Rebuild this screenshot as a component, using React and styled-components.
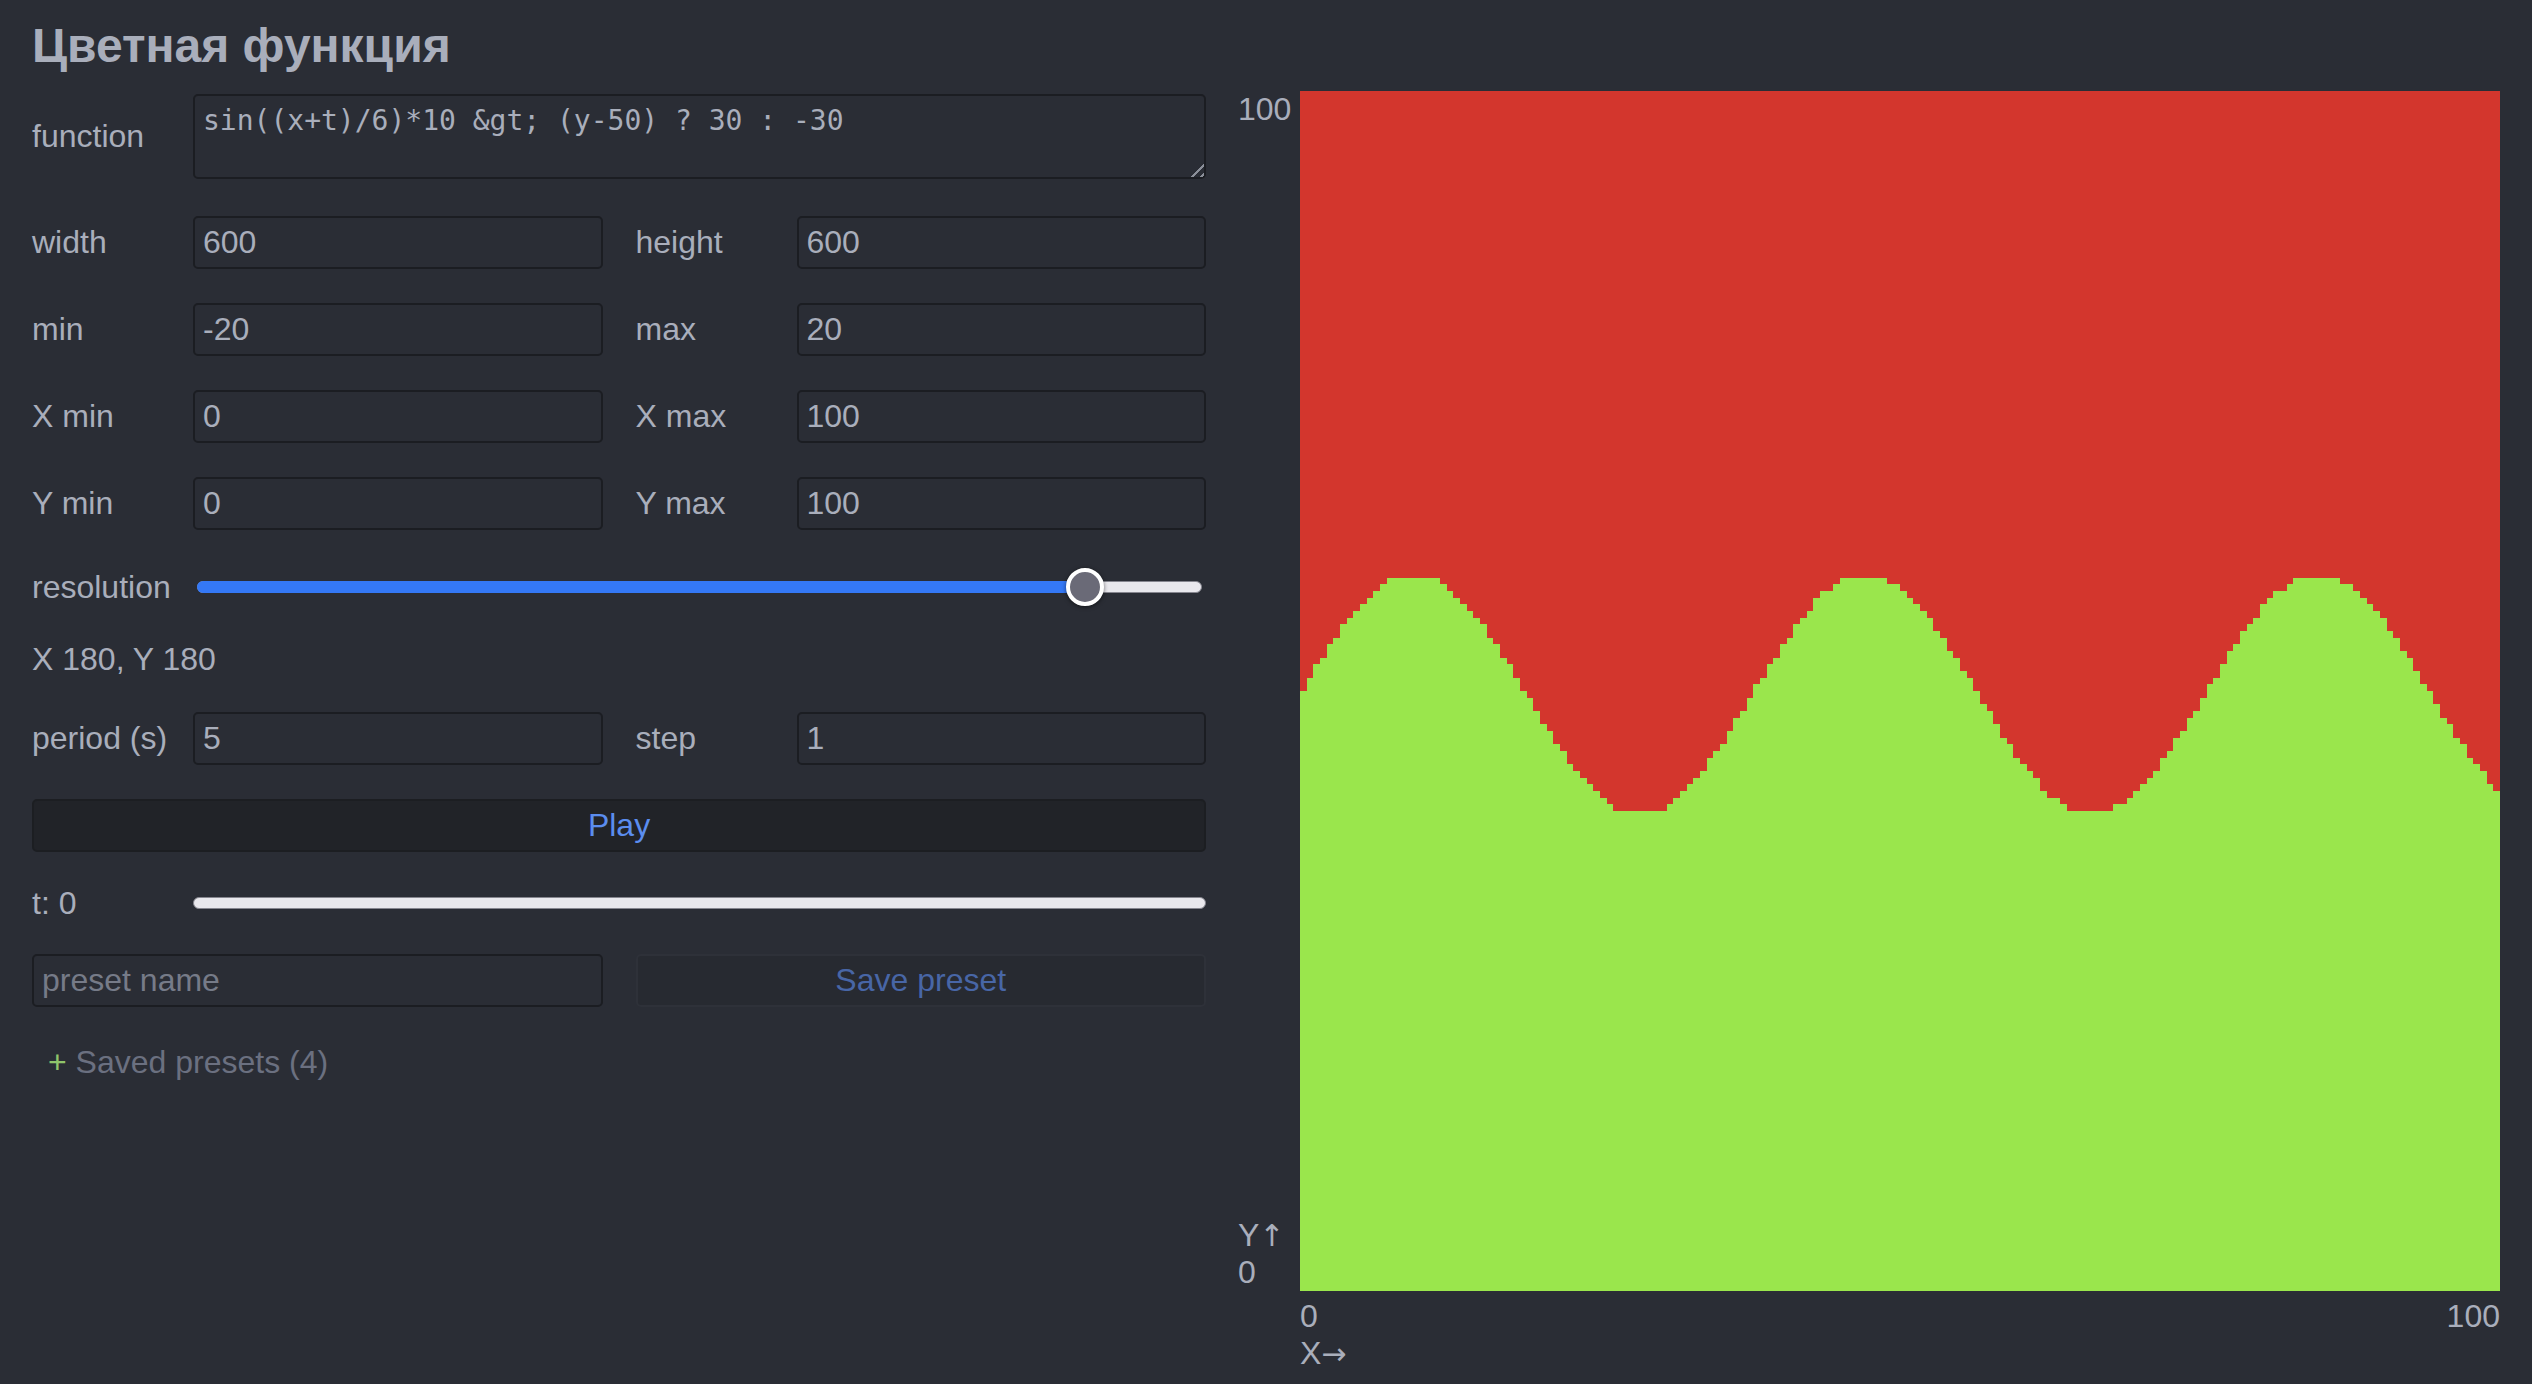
import React from "react";
import styled, { createGlobalStyle } from "styled-components";

const GlobalStyle = createGlobalStyle`
  html, body { margin: 0; padding: 0; background: #2a2d35; }
  * { box-sizing: border-box; }
`;

const Page = styled.div`
  min-height: 100vh;
  padding: 18px 32px 0;
  background: #2a2d35;
  color: #a9aebb;
  font-family: "Liberation Sans", Arial, sans-serif;
`;

const Title = styled.h1`
  margin: 0;
  font-size: 48px;
  line-height: 55px;
  font-weight: 700;
  color: #a9aebb;
`;

const Main = styled.div`
  display: flex;
  align-items: flex-start;
  gap: 32px;
  margin-top: 18px;
`;

const Form = styled.div`
  width: 1174px;
  display: flex;
  flex-direction: column;
  gap: 34px;
  padding-top: 3px;
`;

const Row = styled.div`
  display: grid;
  grid-template-columns: 128px 1fr 128px 1fr;
  grid-template-rows: ${(p) => p.$h || 53}px;
  column-gap: 33px;
  align-items: center;
  height: ${(p) => p.$h || 53}px;
  margin-top: ${(p) => p.$mt || 0}px;
`;

const Label = styled.label`
  font-size: 32px;
  line-height: 37px;
  white-space: nowrap;
  color: #a9aebb;
`;

const Text = styled.div`
  font-size: 32px;
  line-height: 37px;
  height: 37px;
  margin-top: -3px;
  color: #a9aebb;
`;

const Input = styled.input`
  grid-column: span ${(p) => p.$span || 1};
  width: 100%;
  min-width: 0;
  height: 53px;
  padding: 0 8px;
  background: #2a2d35;
  border: 2px solid #1b1d22;
  border-radius: 5px;
  color: #a9aebb;
  font-family: "Liberation Sans", Arial, sans-serif;
  font-size: 32px;
  outline: none;
  &::placeholder { color: #767b88; }
`;

const Area = styled.textarea`
  grid-column: span 3;
  width: 100%;
  height: 85px;
  padding: 8px;
  background: #2a2d35;
  border: 2px solid #1b1d22;
  border-radius: 5px;
  color: #a9aebb;
  font-family: "DejaVu Sans Mono", "Liberation Mono", monospace;
  font-size: 28px;
  outline: none;
  resize: vertical;
  &::-webkit-resizer {
    background:
      linear-gradient(135deg, #2a2d35 50%, transparent 50%),
      repeating-linear-gradient(135deg, #8b8f99 0 2px, transparent 2px 6px);
  }
`;

const Button = styled.button`
  grid-column: span ${(p) => p.$span || 1};
  width: 100%;
  height: 53px;
  border-radius: 5px;
  border: 2px solid ${(p) => (p.$muted ? "#2e3139" : "#1c1e22")};
  background: ${(p) => (p.$muted ? "#272a31" : "#212328")};
  color: ${(p) => (p.$muted ? "#4866a6" : "#5b8def")};
  font-family: "Liberation Sans", Arial, sans-serif;
  font-size: 32px;
  padding: 0;
  cursor: pointer;
`;

const Track = styled.div`
  grid-column: span 3;
  position: relative;
  height: 12px;
  margin: 0 ${(p) => p.$inset || 0}px;
  border-radius: 6px;
  background: #e9e8ed;
  border: 1px solid #86868f;
`;

const Fill = styled.div`
  position: absolute;
  left: -1px;
  top: -1px;
  bottom: -1px;
  border-radius: 6px;
  background: #3478f6;
`;

const Thumb = styled.div`
  position: absolute;
  top: 50%;
  width: 38px;
  height: 38px;
  margin: -19px 0 0 -19px;
  border-radius: 50%;
  background: #6a6a77;
  border: 4px solid #ffffff;
  box-shadow: 0 1px 4px rgba(0, 0, 0, 0.55);
`;

const Summary = styled.div`
  font-size: 32px;
  line-height: 37px;
  padding-left: 16px;
  margin-top: 3px;
  color: #6b7080;
`;

const Plus = styled.span`
  color: #8fc46b;
`;

const ChartGrid = styled.div`
  display: grid;
  grid-template-columns: 54px 1200px;
  grid-template-rows: 1200px auto;
  column-gap: 8px;
  font-size: 32px;
  line-height: 37px;
  color: #a9aebb;
`;

const AxisY = styled.div`
  display: flex;
  flex-direction: column;
  justify-content: space-between;
`;

const AxisX = styled.div`
  grid-column: 2;
  display: flex;
  justify-content: space-between;
  margin-top: 7px;
`;

const Stack = styled.div`
  display: flex;
  flex-direction: column;
`;

const Arrow = styled.span`
  font-family: "DejaVu Sans", sans-serif;
  font-size: 30px;
`;

const Plot = styled.svg`
  display: block;
  width: 1200px;
  height: 1200px;
`;

function Slider({ value, inset, thumb }) {
  return (
    <Track $inset={inset}>
      {thumb && <Fill style={{ width: `calc(${value}% + 1px)` }} />}
      {thumb && <Thumb style={{ left: `${value}%` }} />}
    </Track>
  );
}

function buildPath() {
  const N = 180;
  let d = `M0 ${N}`;
  for (let i = 0; i < N; i++) {
    const x = ((i + 0.5) / N) * 100;
    let h = 0;
    for (let j = 0; j < N; j++) {
      const y = ((j + 1) / N) * 100;
      if (10 * Math.sin(x / 6) > y - 50) h = j + 1;
    }
    d += ` L${i} ${N - h} L${i + 1} ${N - h}`;
  }
  d += ` L${N} ${N} Z`;
  return d;
}

const FORMULA = "sin((x+t)/6)*10 &gt; (y-50) ? 30 : -30";

export default function App() {
  const path = buildPath();
  return (
    <Page>
      <GlobalStyle />
      <Title>Цветная функция</Title>
      <Main>
        <Form>
          <Row $h={85}>
            <Label>function</Label>
            <Area defaultValue={FORMULA} spellCheck={false} />
          </Row>
          <Row $mt={3}>
            <Label>width</Label>
            <Input defaultValue="600" />
            <Label>height</Label>
            <Input defaultValue="600" />
          </Row>
          <Row>
            <Label>min</Label>
            <Input defaultValue="-20" />
            <Label>max</Label>
            <Input defaultValue="20" />
          </Row>
          <Row>
            <Label>X min</Label>
            <Input defaultValue="0" />
            <Label>X max</Label>
            <Input defaultValue="100" />
          </Row>
          <Row>
            <Label>Y min</Label>
            <Input defaultValue="0" />
            <Label>Y max</Label>
            <Input defaultValue="100" />
          </Row>
          <Row $h={46}>
            <Label>resolution</Label>
            <Slider value={88.46} inset={4} thumb />
          </Row>
          <Text>X 180, Y 180</Text>
          <Row>
            <Label>period (s)</Label>
            <Input defaultValue="5" />
            <Label>step</Label>
            <Input defaultValue="1" />
          </Row>
          <Button>Play</Button>
          <Row $h={34}>
            <Label>t: 0</Label>
            <Slider value={0} inset={0} />
          </Row>
          <Row>
            <Input $span={2} placeholder="preset name" />
            <Button $span={2} $muted>Save preset</Button>
          </Row>
          <Summary>
            <Plus>+</Plus> Saved presets (4)
          </Summary>
        </Form>
        <ChartGrid>
          <AxisY>
            <span>100</span>
            <Stack>
              <span>Y<Arrow>↑</Arrow></span>
              <span>0</span>
            </Stack>
          </AxisY>
          <Plot viewBox="0 0 180 180" preserveAspectRatio="none" shapeRendering="crispEdges">
            <rect x="0" y="0" width="180" height="180" fill="#d3362d" />
            <path d={path} fill="#9ae64c" />
          </Plot>
          <AxisX>
            <Stack>
              <span>0</span>
              <span>X<Arrow>→</Arrow></span>
            </Stack>
            <span>100</span>
          </AxisX>
        </ChartGrid>
      </Main>
    </Page>
  );
}
